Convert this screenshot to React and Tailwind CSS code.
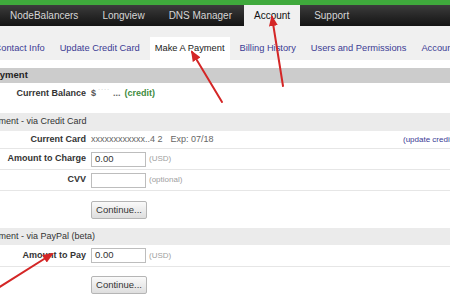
import React from 'react';

const Row = ({ label, children, className = '' }) => (
  <div className={`flex items-center border-b border-[#e6e6e6] ${className}`}>
    <div className="w-[86px] shrink-0 text-right text-[9px] font-bold text-[#333]">{label}</div>
    <div className="ml-[5px] flex flex-1 items-center">{children}</div>
  </div>
);

const Input = ({ value = '' }) => (
  <div className="flex h-[15px] w-[55px] items-center border border-[#bdbdbd] bg-white px-[3px] text-[9.5px] text-[#333]">
    {value}
  </div>
);

const ContinueButton = () => (
  <button className="h-[18px] w-[56px] rounded-[2px] border border-[#b5b5b5] bg-gradient-to-b from-[#fafafa] to-[#dedede] text-[9.5px] text-[#333]">
    Continue...
  </button>
);

const App = () => {
  return (
    <div className="relative h-[300px] w-[450px] overflow-hidden bg-white font-['Liberation_Sans',Arial,sans-serif]">
      <div className="h-[5px] bg-[#3fa93c]" />

      <nav className="flex h-[21px] items-stretch whitespace-nowrap bg-gradient-to-b from-[#3c3c3c] to-[#141414] pl-[10px] text-[10px] text-[#d6d6d6]">
        <span className="flex items-center">NodeBalancers</span>
        <span className="ml-[24px] flex items-center">Longview</span>
        <span className="ml-[24px] flex items-center">DNS Manager</span>
        <span className="ml-[12px] flex items-center bg-[#f0f0f0] px-[10px] text-[#111]">Account</span>
        <span className="ml-[14px] flex items-center">Support</span>
      </nav>

      <div className="flex h-[34px] items-end whitespace-nowrap bg-[#f0f0f0] text-[9.3px] text-[#3b3b94]">
        <div className="ml-[-5.5px] flex h-[23px] items-center gap-[15px]">
          <span>Contact Info</span>
          <span>Update Credit Card</span>
          <span className="-mx-[5px] flex h-full items-center bg-white px-[5px] text-[#222]">Make A Payment</span>
          <span>Billing History</span>
          <span>Users and Permissions</span>
          <span>Account Settings</span>
        </div>
      </div>

      <div className="mt-[8px] whitespace-nowrap">
        <div className="flex h-[15px] items-center bg-[#cccccc] text-[9.5px] font-bold text-[#222]">
          <span className="ml-[-47px]">Make A Payment</span>
        </div>
        <div className="flex h-[22px] items-center">
          <div className="w-[86px] shrink-0 text-right text-[9px] font-bold text-[#333]">Current Balance</div>
          <div className="ml-[5px] flex items-center text-[9px]">
            <span className="font-bold text-[#555]">$</span>
            <span className="ml-[2px] text-[#cfcfcf]">˙˙˙˙</span>
            <span className="ml-[3px] font-bold text-[#666]">...</span>
            <span className="ml-[4px] font-bold text-[#3f8c3f]">(credit)</span>
          </div>
        </div>

        <div className="mt-[8px] flex h-[18px] items-center bg-[#ebebeb] text-[9px] text-[#333]">
          <span className="ml-[-49px]">Make A Payment - via Credit Card</span>
        </div>
        <Row label="Current Card" className="h-[18px]">
          <span className="w-[312px] shrink-0 text-[9px] text-[#666]">
            xxxxxxxxxxxx..4 2<span className="ml-[8px]">Exp: 07/18</span>
          </span>
          <span className="text-[8px] text-[#3b3b94]">(update credit card)</span>
        </Row>
        <Row label="Amount to Charge" className="h-[21px]">
          <Input value="0.00" />
          <span className="ml-[3px] text-[8px] text-[#a0a0a0]">(USD)</span>
        </Row>
        <Row label="CVV" className="h-[21px]">
          <Input />
          <span className="ml-[3px] text-[8px] text-[#a0a0a0]">(optional)</span>
        </Row>
        <div className="flex h-[37px] items-start pt-[5px]">
          <div className="ml-[91px]">
            <ContinueButton />
          </div>
        </div>

        <div className="flex h-[17px] items-center bg-[#ebebeb] text-[9px] text-[#333]">
          <span className="ml-[-49px]">Make A Payment - via PayPal (beta)</span>
        </div>
        <Row label="Amount to Pay" className="h-[22px]">
          <Input value="0.00" />
          <span className="ml-[3px] text-[8px] text-[#a0a0a0]">(USD)</span>
        </Row>
        <div className="flex items-start pt-[4px]">
          <div className="ml-[91px]">
            <ContinueButton />
          </div>
        </div>
      </div>

      <svg className="pointer-events-none absolute inset-0" width="450" height="300" viewBox="0 0 450 300">
        <defs>
          <marker id="ah" markerUnits="userSpaceOnUse" markerWidth="11" markerHeight="9" refX="9" refY="4.5" orient="auto">
            <path d="M0,0 L11,4.5 L0,9 z" fill="#d42626" />
          </marker>
        </defs>
        <g stroke="#d42626" strokeWidth="2" strokeLinecap="round">
          <line x1="283" y1="86" x2="272" y2="17" markerEnd="url(#ah)" />
          <line x1="222" y1="102" x2="192" y2="52" markerEnd="url(#ah)" />
          <line x1="-2" y1="288" x2="52" y2="254" markerEnd="url(#ah)" />
        </g>
      </svg>
    </div>
  );
};

export default App;
